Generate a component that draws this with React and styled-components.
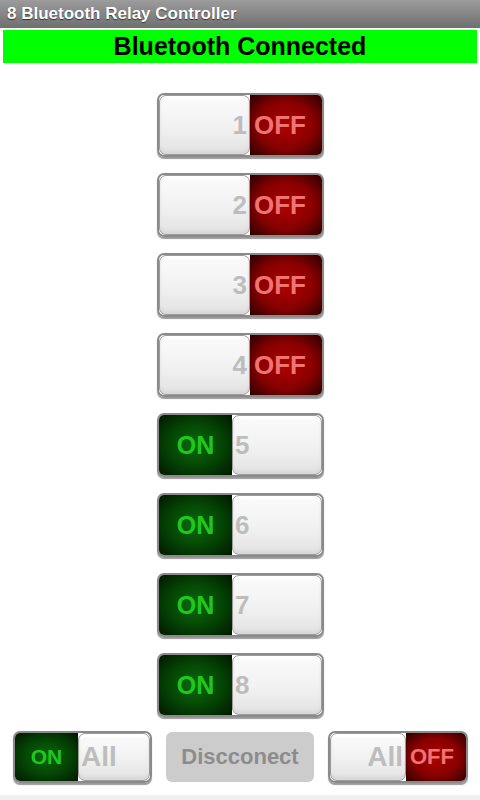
import React, { useState } from "react";
import styled, { createGlobalStyle } from "styled-components";

const GlobalStyle = createGlobalStyle`
  body {
    margin: 0;
    background: #ffffff;
    font-family: "Liberation Sans", Arial, sans-serif;
  }
`;

const Page = styled.div`
  width: 480px;
  height: 800px;
  display: flex;
  flex-direction: column;
  background: #fff;
  overflow: hidden;
`;

const TitleBar = styled.div`
  height: 28px;
  display: flex;
  align-items: center;
  padding-left: 7px;
  background: linear-gradient(#9c9c9c, #6f6f6f);
  color: #fff;
  font-weight: bold;
  font-size: 17px;
  text-shadow: 0 1px 1px rgba(0, 0, 0, 0.6);
`;

const Status = styled.div`
  margin: 2px 3px 0 3px;
  height: 33px;
  background: #00ff00;
  display: flex;
  align-items: center;
  justify-content: center;
  font-weight: bold;
  font-size: 25px;
  color: #000;
`;

const List = styled.div`
  display: flex;
  flex-direction: column;
  align-items: center;
  gap: 16px;
  margin-top: 30px;
  padding-left: 1px;
`;

const Frame = styled.div`
  width: ${(p) => p.w}px;
  height: ${(p) => p.h}px;
  display: flex;
  box-sizing: border-box;
  border: 2px solid #8a8a8a;
  border-radius: 7px;
  overflow: hidden;
  box-shadow: 0 2px 1px #9a9a9a;
  cursor: pointer;
  user-select: none;
`;

const Knob = styled.div`
  flex: 1;
  display: flex;
  align-items: center;
  justify-content: ${(p) => (p.on ? "flex-start" : "flex-end")};
  padding: 0 2px;
  background: linear-gradient(#fbfbfb 0%, #f1f1f1 55%, #e2e2e2 100%);
  border: 1px solid #9a9a9a;
  border-radius: 7px;
  box-shadow: inset 0 -3px 3px #d8d8d8, inset 0 3px 2px #fff;
  color: #bdbdbd;
  font-weight: bold;
  font-size: ${(p) => p.fs}px;
`;

const Side = styled.div`
  width: ${(p) => p.w}px;
  display: flex;
  align-items: center;
  justify-content: ${(p) => (p.on ? "center" : "flex-start")};
  padding-left: ${(p) => (p.on ? 0 : 4)}px;
  box-sizing: border-box;
  font-weight: bold;
  font-size: ${(p) => p.fs}px;
  color: ${(p) => (p.on ? "#1fc81f" : "#ee7373")};
  background: ${(p) =>
    p.on
      ? "radial-gradient(ellipse at center, #0b6a0b 0%, #044204 55%, #001800 100%)"
      : "radial-gradient(ellipse at center, #b00000 0%, #880000 55%, #2a0000 100%)"};
`;

const Toggle = ({ label, initial, w = 167, h = 64, side = 72, fs = 26, sfs = 26 }) => {
  const [on, setOn] = useState(initial);
  return (
    <Frame w={w} h={h} onClick={() => setOn(!on)}>
      {on && (
        <Side on w={side} fs={sfs}>
          ON
        </Side>
      )}
      <Knob on={on} fs={fs}>
        {label}
      </Knob>
      {!on && (
        <Side w={side} fs={sfs}>
          OFF
        </Side>
      )}
    </Frame>
  );
};

const BottomRow = styled.div`
  display: flex;
  align-items: center;
  gap: 14px;
  margin-top: 14px;
  padding-left: 13px;
`;

const Button = styled.button`
  width: 148px;
  height: 50px;
  border: none;
  border-radius: 6px;
  background: #cccccc;
  color: #8c8c8c;
  font-family: "Liberation Sans", Arial, sans-serif;
  font-weight: bold;
  font-size: 22px;
  cursor: pointer;
`;

const Footer = styled.div`
  margin-top: auto;
  height: 5px;
  background: #efefef;
`;

export default function App() {
  const relays = [false, false, false, false, true, true, true, true];
  return (
    <Page>
      <GlobalStyle />
      <TitleBar>8 Bluetooth Relay Controller</TitleBar>
      <Status>Bluetooth Connected</Status>
      <List>
        {relays.map((on, i) => (
          <Toggle key={i} label={i + 1} initial={on} side={on ? 73 : 72} sfs={on ? 25 : 26} />
        ))}
      </List>
      <BottomRow>
        <Toggle label="All" initial={true} w={139} h={52} side={63} fs={28} sfs={21} />
        <Button>Discconect</Button>
        <Toggle label="All" initial={false} w={140} h={52} side={60} fs={28} sfs={22} />
      </BottomRow>
      <Footer />
    </Page>
  );
}
